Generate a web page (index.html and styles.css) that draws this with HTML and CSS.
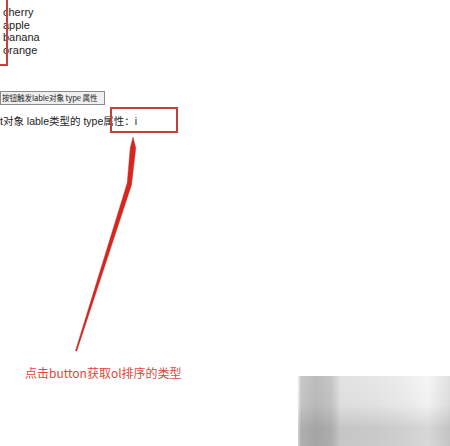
FILE: index.html
```html
<!DOCTYPE html>
<html>
<head>
<meta charset="utf-8">
<link rel="stylesheet" href="styles.css">
</head>
<body>
<div class="page">
  <ol class="fruits">
    <li>cherry</li>
    <li>apple</li>
    <li>banana</li>
    <li>orange</li>
  </ol>
  <button class="btn">按钮触发lable对象 type 属性</button>
  <p class="result">t对象 lable类型的 type属性：i</p>
  <p class="caption">点击button获取ol排序的类型</p>

  <div class="bracket"></div>
  <div class="highlight"></div>
  <svg class="arrow" width="450" height="446" viewBox="0 0 450 446">
    <polygon points="133,137 135.8,148 131.5,185 76.8,351 75.4,351 127.2,183 130.2,148" fill="#d8261c" stroke="#b8302a" stroke-width="0.4"/>
  </svg>
  <div class="mosaic"></div>
</div>
</body>
</html>
```
FILE: styles.css
```css
html, body {
  margin: 0;
  padding: 0;
  background: #ffffff;
}
.page {
  position: relative;
  width: 450px;
  height: 446px;
  overflow: hidden;
  font-family: "Liberation Sans", "Noto Sans CJK SC", sans-serif;
  color: #222;
}
.fruits {
  list-style: none;
  margin: 0;
  padding: 6px 0 0 3px;
  font-size: 11px;
  line-height: 12.7px;
}
.btn {
  display: block;
  margin: 34px 0 0 0;
  padding: 0 1px;
  height: 14px;
  width: 105px;
  font-family: "Noto Sans CJK SC", "Liberation Sans", sans-serif;
  font-size: 7.6px;
  line-height: 12px;
  letter-spacing: -0.1px;
  color: #222;
  background: #efefef;
  border: 1px solid #8a8a8a;
  border-radius: 0;
  white-space: nowrap;
  overflow: hidden;
  text-align: left;
}
.result {
  margin: 9px 0 0 0;
  font-size: 10.5px;
  line-height: 14px;
  white-space: nowrap;
}
.caption {
  margin: 238px 0 0 25px;
  font-family: "Noto Sans CJK SC", "Liberation Sans", sans-serif;
  font-size: 12px;
  line-height: 14px;
  color: #e2463a;
  white-space: nowrap;
}
.bracket {
  position: absolute;
  left: 0;
  top: -2px;
  width: 6px;
  height: 66px;
  border-right: 2px solid #c8403c;
  border-bottom: 2px solid #c8403c;
}
.highlight {
  position: absolute;
  left: 110px;
  top: 107px;
  width: 64px;
  height: 22px;
  border: 2px solid #c2403a;
}
.arrow {
  position: absolute;
  left: 0;
  top: 0;
}
.mosaic {
  position: absolute;
  left: 298px;
  top: 376px;
  width: 152px;
  height: 70px;
  background:
    linear-gradient(to bottom, rgba(0,0,0,0) 0%, rgba(0,0,0,0.02) 40%, rgba(0,0,0,0.13) 75%, rgba(0,0,0,0.12) 100%),
    linear-gradient(to right, #f2f2f2 0px, #c8c8c8 3px, #bcbcbc 12%, #c6c6c6 22%, #e2e2e2 28%, #e6e6e6 50%, #ededed 70%, #f6f6f6 85%, #e0e0e0 100%);
}
```
